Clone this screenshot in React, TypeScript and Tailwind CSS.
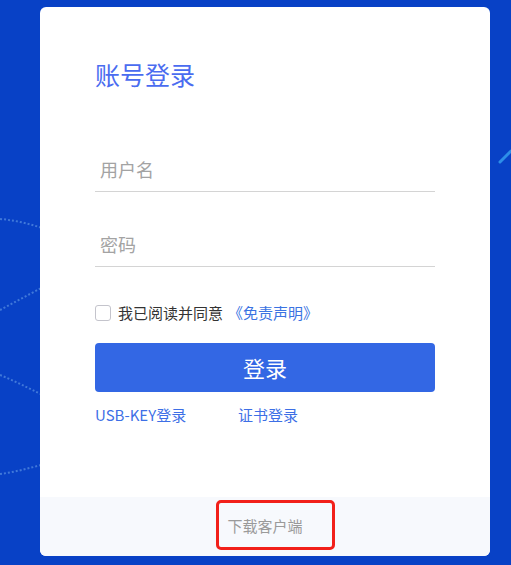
import React from "react";

const cjk = { fontFamily: '"Noto Sans CJK SC", "Noto Sans", sans-serif' };

function Backdrop() {
  return (
    <svg className="absolute inset-0 h-full w-full" viewBox="0 0 511 565" fill="none">
      <g stroke="#4f86df" strokeWidth="2" strokeDasharray="2 2" opacity="0.8">
        <path d="M-20 218 C5 218 25 222 45 229" />
        <path d="M0 310 C15 302 30 294 45 286" />
        <path d="M0 375 C15 381 28 388 45 396" />
        <path d="M0 474 C15 472 30 468 45 464" />
      </g>
      <path d="M500 162 L511 151" stroke="#2d8ee8" strokeWidth="3" strokeLinecap="round" />
    </svg>
  );
}

function UnderlineInput({ placeholder, type }: { placeholder: string; type?: string }) {
  return (
    <input
      type={type ?? "text"}
      placeholder={placeholder}
      className="h-[45px] w-full border-b border-[#d4d4d4] bg-transparent px-[5px] text-[18px] text-[#333] outline-none placeholder:text-[#a3a3a3]"
      style={cjk}
    />
  );
}

export default function App() {
  return (
    <div className="relative min-h-screen overflow-hidden bg-[#0841c6]" style={cjk}>
      <Backdrop />
      <div className="relative ml-[40px] pt-[7px]">
        <div className="flex h-[549px] w-[450px] flex-col overflow-hidden rounded-[6px] bg-white">
          <div className="flex-1 px-[55px] pt-[51px]">
            <h1 className="text-[25px] leading-[32px] font-normal text-[#4a6cf0]">账号登录</h1>

            <div className="mt-[57px]">
              <UnderlineInput placeholder="用户名" />
            </div>
            <div className="mt-[30px]">
              <UnderlineInput placeholder="密码" type="password" />
            </div>

            <label className="mt-[38px] flex h-[16px] items-center">
              <span className="h-[16px] w-[16px] rounded-[3px] border border-[#c4c4cc] bg-white" />
              <span className="ml-[7px] text-[15px] leading-[16px] text-[#333]">我已阅读并同意</span>
              <span className="ml-[5px] text-[15px] leading-[16px] text-[#3a73e2]">《免责声明》</span>
            </label>

            <button className="mt-[22px] flex h-[49px] w-full items-center justify-center rounded-[4px] bg-[#3367e4] text-[22px] text-white">
              登录
            </button>

            <div className="mt-[13px] flex h-[20px] items-center text-[15px] leading-[20px] text-[#3d6fe6]">
              <span className="w-[143px]">USB-KEY登录</span>
              <span>证书登录</span>
            </div>
          </div>

          <div className="relative flex h-[59px] items-center justify-center bg-[#f7f9fd]">
            <span className="text-[15px] text-[#9a9a9a]">下载客户端</span>
            <div className="absolute left-[176px] top-[3px] h-[50px] w-[119px] rounded-[5px] border-[3px] border-[#f2201a]" />
          </div>
        </div>
      </div>
    </div>
  );
}
